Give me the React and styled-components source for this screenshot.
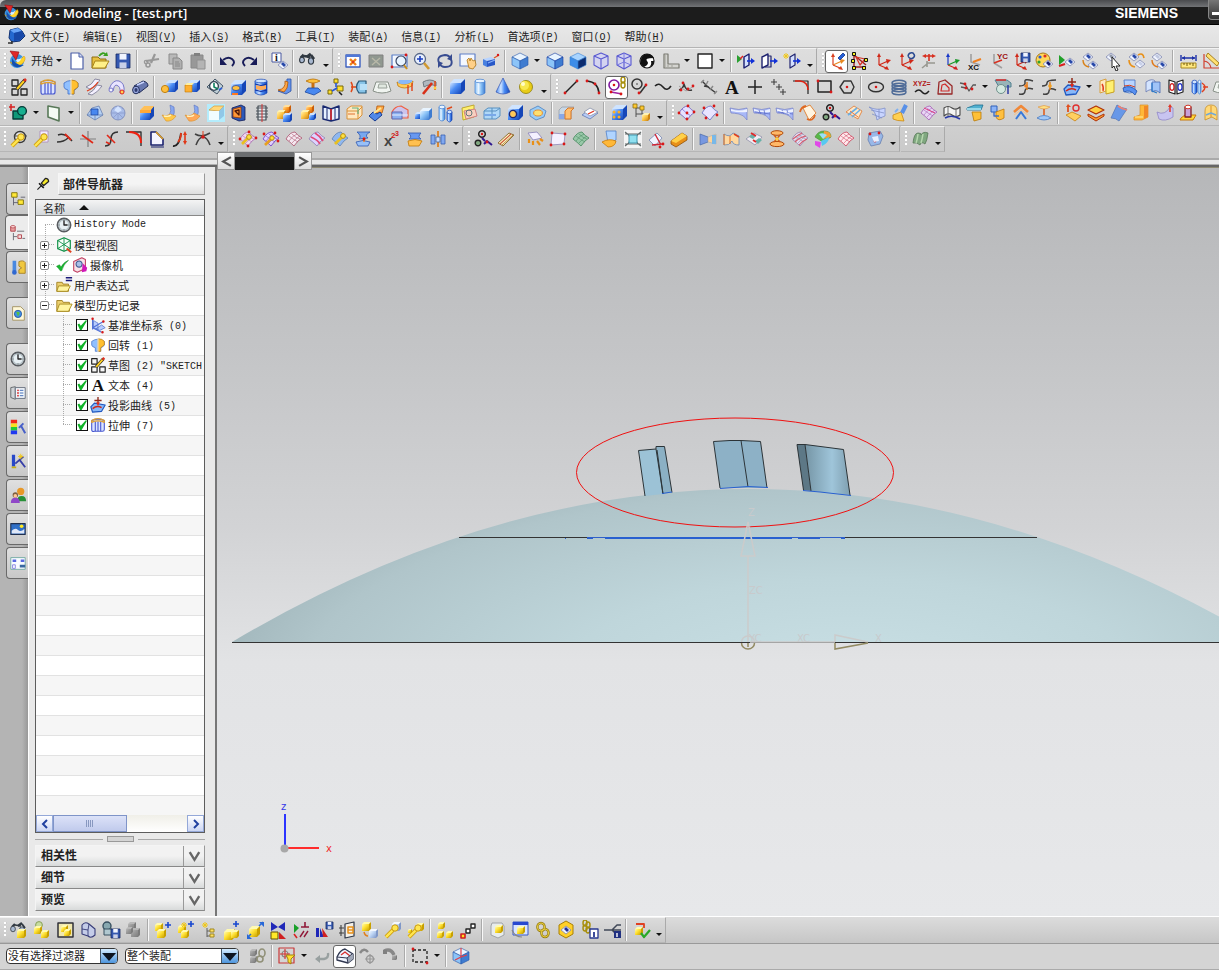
import React from 'react';
import styled, { createGlobalStyle, css } from 'styled-components';

const GlobalStyle = createGlobalStyle`
  * { box-sizing: border-box; }
  body {
    margin: 0;
    background: #c8c8c8;
    color: #222;
    font-family: "Noto Sans CJK SC", "Liberation Sans", sans-serif;
    font-size: 11px;
  }
  button, select { font: inherit; color: inherit; }
`;

/* ---------- drawing helpers: every icon is a list of shapes on a 20 x 20 grid ---------- */

const p = (d, fill = 'none', stroke = 'none', w = 1) => ({ d, fill, stroke, w });
const l = (d, stroke = '#222', w = 1) => p(d, 'none', stroke, w);
const oval = (x, y, rx, ry, fill, stroke, w) =>
  p(`M${x - rx} ${y}a${rx} ${ry} 0 1 0 ${2 * rx} 0a${rx} ${ry} 0 1 0 ${-2 * rx} 0z`, fill, stroke, w);
const dot = (x, y, r = 1.5, fill = '#d81818', stroke, w) => oval(x, y, r, r, fill, stroke, w);
const text = (t, x, y, size, fill = '#111', font = 'Liberation Serif') => ({ t, x, y, size, fill, font });

const tones = {
  blue: ['#cfe4ff', '#4a8cf4', '#1546b8'],
  deep: ['#a8d4ff', '#3d8de8', '#0c2c70'],
  light: ['#e8f4ff', '#8cc4f8', '#3f7cd0'],
  ice: ['#f4f8ff', '#bcd4f4', '#8098c8'],
  gold: ['#fff2b0', '#ffc84a', '#cc8412'],
  orange: ['#ffe0a0', '#ff9c28', '#c85c08'],
  yellow: ['#fffab0', '#ffe030', '#c8a000'],
  gray: ['#b8b8b8', '#989898', '#7c7c7c'],
};
const ramp = (tone) => `url(#ramp-${tone})`;
const cube = (x, y, a, tone = 'blue', k = Math.round(a / 3)) => {
  const [top, , side] = tones[tone];
  return [
    p(`M${x} ${y + k}h${a}v${a}h${-a}z`, ramp(tone)),
    p(`M${x} ${y + k}l${k} ${-k}h${a}l${-k} ${k}z`, top),
    p(`M${x + a} ${y + k}l${k} ${-k}v${a}l${-k} ${k}z`, side),
  ];
};
const iso = (x, y, r, tone = 'light', edge = '#2454a8') => {
  const [top, front, side] = tones[tone];
  const h = r / 2;
  return [
    p(`M${x} ${y - r}l${r} ${h}l${-r} ${h}l${-r} ${-h}z`, top, edge, 0.6),
    p(`M${x - r} ${y - h}l${r} ${h}v${r}l${-r} ${-h}z`, front, edge, 0.6),
    p(`M${x + r} ${y - h}l${-r} ${h}v${r}l${r} ${-h}z`, side, edge, 0.6),
  ];
};
const isoWire = [
  p('M10 2l7 3v9l-7 4-7-4V5z', '#d4d4f0', '#5858d0', 1.1), l('M3 5l7 3 7-3M10 8v10', '#5858d0', 1.1),
];
const can = (x, y, w, h, tone = 'blue') => {
  const [top, , side] = tones[tone];
  return [
    p(`M${x} ${y}v${h}q${w / 2} 4 ${w} 0v${-h}z`, `url(#round-${tone})`, side, 0.7),
    oval(x + w / 2, y, w / 2, 1.8, top, side, 0.7),
  ];
};
const sheet = (fill = '#e4e0ff', stroke = '#7868c0') => [
  p('M2 10Q6 3 11 3Q14 7 18 9Q14 11 10 17Q6 13 2 10z', fill, stroke, 0.9),
];
const mesh = (fill, stroke) => [
  ...sheet(fill, stroke),
  l('M5 7q5 4 9 6M8 5q4 4 8 5M5 12q3-5 8-7M8 14q4-5 8-7', stroke, 0.6),
];
const key = [l('M3 17l7-7', '#d0a010', 4), l('M3 17l7-7', '#ffe650', 2.4), dot(12, 8, 3.2, '#ffe650', '#c89810'), p('M12 3l1 5 5-1-1-3-3 1z', '#d4d4d4')];
const star = (x, y) => [l(`M${x - 3} ${y}h6M${x} ${y - 3}v6M${x - 2} ${y - 2}l4 4M${x + 2} ${y - 2}l-4 4`, '#f0c818', 1)];
const nodes = (...pts) => pts.map(([x, y]) => dot(x, y, 1.4));
const axes = (a = '#d02818', b = a, c = a) => [
  l('M6 14V4', a, 1.2), p('M4 6l2-4 2 4z', a),
  l('M6 14l9-4', b, 1.2), p('M13 8l5 1-4 4z', b),
  l('M6 14l7 3', c, 1.2), p('M11 18l5 1-2-4z', c),
];
const arrowRight = (y = 10, c = '#1030d8') => [l(`M11 ${y}h6`, c, 1.6), p(`M15 ${y - 3}l4 3-4 3z`, c)];
const diamond = (x, y, c = '#2848a8') => [
  p(`M${x - 5} ${y}l5-4 5 4-5 4z`, '#f0f4ff', '#8088b0', 0.8),
  p(`M${x - 2} ${y - 1}l2-2 3 3-2 2z`, c),
];
const link = (x, y, s = '#a89010') => [oval(x, y - 3, 2, 3, 'none', s, 1.5), oval(x, y + 2, 2, 3, 'none', s, 1.5)];
const plus = (x, y, c = '#1848d0') => [l(`M${x - 3} ${y}h6M${x} ${y - 3}v6`, c, 1.6)];
const disk = (x, y, s) => [
  p(`M${x} ${y}h${s}v${s}h${-s}z`, '#3458b0', '#182860', 0.8),
  p(`M${x + s * 0.25} ${y}h${s * 0.5}v${s * 0.4}h${-s * 0.5}z`, '#f0f4ff'),
  p(`M${x + s * 0.25} ${y + s * 0.6}h${s * 0.5}v${s * 0.4}h${-s * 0.5}z`, '#c8d0e8'),
];
const fan = (c1, c2) => [p('M2 4q8 4 16 1v8q-6 2-8 4-1-9-8-13z', c1, c2, 0.8)];
const blade = (lines) => [
  p('M1 5q9 3 17 0v12q-3-5-8-6T2 10z', '#a8b8f8', '#7480c8', 0.7),
  p('M2 6q8 3 16 0v3q-8 1-16-1z', '#eef2ff'),
  ...(lines ? [l('M7 7q1 3 2 4M12 7q1 4 1 5M3 9q8 1 15 2', '#5c6cc8', 0.8)] : []),
];
const binocular = (s = '#303840') => [
  l('M3 7l3-3M9 6l4-3', s, 3.4), l('M6 5l6 1', s, 2.4),
  oval(4, 9, 2.4, 2.8, '#a8b8d0', s, 1.1), oval(13, 10, 2.6, 3.2, '#a8b8d0', s, 1.1), l('M13 4l3 4', s, 2.6),
];

const icons = {
  nx: [dot(10, 11, 7, '#3c94e0'), p('M3 12Q8 16 17 6q3 3-2 8-6 5-12-2z', '#ffd428', '#d89000', 0.5), p('M5 8q4 8 12 7-8 5-12-1z', '#1450b0'), p('M8 8q4 3 7-1-2 6-5 5z', '#d8f0ff'), p('M3 1l9 1-3 8z', '#e02828', '#900c10', 0.6)],
  app: [p('M4 4l8-2 4 3 3 5-5 5-8 1-3-4z', '#2468d0', '#103070'), p('M4 4l8-2 4 3-8 2z', '#68a4f8'), p('M8 7l8-2 2 5-4 4-6 1z', '#1848a8'), l('M2 17h4M6 15v3', '#303030', 1.4)],
  new: [p('M4 2h8l4 4v12H4z', '#fff', '#4c60a8', 1.2), p('M12 2v4h4', '#d4dcf4', '#4c60a8')],
  open: [p('M2 6h6l2 2h6v9H2z', '#e8c040', '#8c6c10'), p('M5 10h14l-4 7H2z', '#fff088', '#a88418'), l('M9 5q4-5 7-1', '#38a020', 1.8), p('M13 5l5 0-1-4z', '#38a020')],
  save: disk(3, 3, 14),
  cut: [l('M13 3l-4 9M4 10l13-2', '#989898', 2.2), dot(6, 14, 2, 'none', '#989898', 1.6), dot(4, 11, 1.6, 'none', '#989898', 1.4)],
  copy: [p('M4 3h8v10H4z', '#b8b8b8', '#8c8c8c'), p('M8 7h6l3 3v8H8z', '#b0b0b0', '#888'), l('M10 11h4M10 13h5M10 15h5', '#888')],
  paste: [p('M3 4h12v13H3z', '#989898', '#888'), p('M6 2h6v3H6z', '#808080'), p('M9 9h8v9H9z', '#b4b4b4', '#909090')],
  undo: [l('M6 9q5-4 9-1t0 7', '#181c58', 2), p('M3 6v8h7z', '#181c58')],
  redo: [l('M14 9Q9 5 5 8t0 7', '#181c58', 2), p('M17 6v8h-7z', '#181c58')],
  info: [p('M3 2h9v9H3z', '#fff', '#4858a0'), text('i', 6, 10, 10), ...diamond(14, 14)],
  find: binocular(),
  fit: [p('M3 4h14v12H3z', '#fff', '#3c60c0', 1.4), p('M3 4h14v2H3z', '#5078d8'), l('M7 8l6 6M13 8l-6 6', '#f08018', 2.4), dot(10, 11, 1, '#d82020')],
  fitGray: [p('M3 4h14v12H3z', '#909890', '#808080'), l('M6 7l8 7M14 7l-8 7', '#b8b8a8', 1.4)],
  zoomBox: [p('M3 4h15v12H3z', '#f4f8ff', '#5c80c8', 1.2), dot(12, 10, 5, '#e8f4ff', '#384868', 1.2), l('M15 14l3 4', '#c89020', 2), ...nodes([17, 4], [3, 16])],
  zoomIn: [dot(8, 8, 5.5, '#e8f0ff', '#586888', 1.3), l('M12 12l5 6', '#d09830', 2.6), ...plus(8, 8, '#183cc0')],
  rotate: [l('M4 12Q1 5 10 4q4 0 6 4M16 8q3 8-6 8-4 0-6-4', '#384c90', 1.8), p('M17 3v7l-5-2zM3 17v-7l5 2z', '#384c90')],
  pan: [p('M2 3h15v12H2z', '#f4f8ff', '#6080c8', 1.2), p('M9 9l2-2 1 3 1-3 2 3 2-1 1 5-3 4-4-1z', '#ffd088', '#b07818', 0.8)],
  perspective: [p('M2 8l8-2 4 2-8 2z', '#b8d4ff'), p('M2 8l4 2v6l-4-2z', '#4880e0'), p('M6 10l8-2v6l-8 2z', '#2858c8'), l('M13 7l5-3', '#e05020', 1.2), dot(17, 4, 1.2), l('M7 12l7-3', '#88b0f8', 1.2)],
  shaded: iso(10, 10, 8, 'light'),
  shadedEdge: iso(10, 10, 8, 'light', '#1038a0'),
  solid: iso(10, 10, 8, 'deep', '#3880d0'),
  wire: isoWire,
  wireHidden: [...isoWire, l('M10 2v9l-7 3M10 11l7 3', '#7878e0', 1)],
  contrast: [dot(10, 10, 7, '#fff', '#111', 1.2), p('M10 3a7 7 0 0 0-3 13q6-3 3-6t7-3q-2-4-7-4z', '#111'), p('M14 10h3q0 5-5 6 3-2 2-6z', '#111')],
  bracket: [p('M4 3h4v10h11v4H4z', '#d4d4d0', '#787870', 1.2), l('M5 4v12M8 14v2M12 14v2', '#a0a098')],
  blank: [p('M3 3h14v14H3z', '#fff', '#222', 1.4)],
  clipA: [p('M8 6l5-3v11l-5 3z', '#d4e0ff', '#181c70', 1.4), ...arrowRight(10), p('M1 4l5 4-5 4z', '#28a030'), l('M4 8l3-3', '#e02020', 1.4)],
  clipB: [p('M3 6l6-3v11l-6 3z', '#fff', '#202470', 1.4), p('M9 5h3v11H6', 'none', '#202470', 1.2), ...arrowRight(10)],
  clipC: [p('M8 6l5-3v11l-5 3z', '#d4e0ff', '#202470', 1.2), ...arrowRight(10), ...star(4, 5)],

  wcsMove: [...axes('#d84020', '#e88820', '#d84020'), p('M11 7l5-5 2 2-5 5z', '#2460d8', '#103490', 0.8)],
  wcsNodes: [l('M4 3v14M4 16h12M4 4l12 10', '#a02020', 1.4), l('M6 6l9 2-5 6z', '#d83020', 1.2), ...[[4, 3], [3, 10], [4, 17], [16, 9], [14, 17]].map(([x, y]) => p(`M${x - 1.5} ${y - 1.5}h3v3h-3z`, '#f8f020', '#111'))],
  wcs: axes(),
  wcsRotate: [...axes(), l('M12 5q1-4 5-3 3 3 0 5-3 2-5-2', '#284890', 1.6)],
  wcsShift: [l('M10 3v7M5 5h10', '#d83020', 1.6), p('M3 5l4-2v4zM17 5l-4-2v4z', '#d83020'), l('M8 10v6M8 12h8M8 13l-5 4', '#989890', 1.6)],
  wcsColor: axes('#1838c8', '#189828', '#d02020'),
  wcsX: [l('M6 3v8l9 3', '#a0a0a0', 1.6), l('M8 11l8-3', '#f08020', 2), text('XC', 3, 19, 8, '#111', 'Liberation Sans')],
  wcsY: [l('M6 3v9l8 5', '#a0a0a0', 1.6), l('M6 12l8-3', '#d83020', 1.6), text('YC', 9, 8, 8, '#a01010', 'Liberation Sans')],
  wcsSave: [...axes(), ...disk(10, 2, 9)],
  palette: [dot(9, 9, 7, '#ffd858', '#a87818'), dot(6, 6, 1.6, '#2858d8'), dot(11, 5, 1.6, '#e03020'), dot(5, 11, 1.6, '#30a030'), ...diamond(14, 13, '#101870')],
  play: [p('M2 4l6 5-6 5z', '#20a028'), l('M2 15l6-2', '#d82020', 2), ...diamond(13, 11)],
  partA: [...diamond(8, 6), ...diamond(13, 14), l('M3 9q0 6 6 7', '#d88018', 1.4)],
  partPick: [...diamond(8, 6, '#9098a8'), p('M9 6l8 9-4 0 2 4-2 1-2-5-2 2z', '#fff', '#222')],
  partB: [...diamond(8, 6), ...diamond(14, 13, '#c8d0e8'), l('M12 4q5-3 6 3M3 9q0 6 6 7', '#e89018', 1.6)],
  partC: [...diamond(8, 6, '#c0c8e0'), ...diamond(13, 14), l('M3 9q0 6 6 7', '#e07818', 1.4)],
  ruler: [l('M3 4v6M18 4v6M4 7h13', '#1c30a8', 1.4), p('M4 7l3-2v4zM17 7l-3-2v4z', '#1c30a8'), p('M3 12h15v5H3z', '#ffe880', '#a88820'), l('M6 12v2M9 12v3M12 12v2M15 12v3', '#705808')],
  angle: [l('M3 3v14h15M3 10q6 1 7 7', '#d04030', 1.2), p('M7 2l11 10-2 3L5 5z', '#ffe070', '#a88020')],

  sketch: [l('M3 3h6v6H3zM3 12h6v6H3zM12 12h6v6h-6z', '#222', 1.3), l('M8 12l8-9', '#222', 3.4), l('M8 12l7-8', '#ffd020', 2), l('M15 4l2-2', '#e03020', 2.6)],
  extrude: [p('M3 5v10q0 3 3 2h9q2 0 2-2V5q-7-3-14 0z', '#dce4ff', '#4858d0', 1.2), l('M7 6v11M10 6v11M13 6v11', '#4858d0', 1.2), l('M3 5q7-4 14 0v2q-7-3-14 0z', '#e0a030', 1.4)],
  revolve: [p('M3 6q7-5 14 0v4q-2 3-4 3v4H7v-4q-4-1-4-3z', '#90c0ff', '#4070c8', 0.8), p('M10 3q5 0 7 3v4l-4 3v4h-3z', '#ffc030', '#c08010', 0.8), l('M10 1v18', '#f8f8f8', 1)],
  sweep: [p('M2 10Q8 8 11 2l5 1Q13 9 6 12z', '#f4f0ff', '#808098', 0.9), p('M4 17Q10 14 13 8l5 1q-4 6-10 9z', '#f4f0ff', '#808098', 0.9), l('M3 14Q10 11 14 5', '#e04020', 1.3)],
  variSweep: [p('M2 12Q6 2 12 4q6 2 5 11l-4 1q1-7-4-8-2 0-3 6z', '#e8e4ff', '#7878c8'), dot(4, 13, 2, '#f4f4ff', '#7878c8'), dot(15, 15, 2, '#ffd050', '#e02020')],
  tube: [p('M4 9l9-5q5 1 5 5l-9 7z', '#6878b0', '#202c58'), oval(6, 13, 3.4, 3.8, '#98a8e0', '#202c58'), oval(6, 13, 1.6, 2, '#303c70'), l('M7 8l7-3', '#c8d4ff', 1.4)],
  boss: [...cube(7, 3, 9, 'blue', 3), dot(6, 12, 3.6, '#ffc040', '#c08010')],
  pad: [...cube(6, 3, 9, 'blue', 3), p('M3 8h7v7H3z', '#ffb030', '#c07808', 0.6), p('M3 8l2-2h7l-2 2z', '#fff0a0')],
  hole: [p('M2 10L10 2l8 7-6 8z', '#c0d0d8', '#485868'), dot(9, 9, 4.4, '#fff', '#384858', 1.4), l('M9 6v4l4 2', '#108060', 1.6), l('M14 13l3-2', '#3060d0', 2)],
  pocket: [...cube(3, 3, 11, 'blue', 4), oval(8, 11, 4, 2.5, '#ffc040', '#1438a0', 0.7), p('M4 16h6v2H4z', '#ff7820')],
  groove: [...can(4, 4, 12, 12, 'blue'), p('M5 8q5 2 10 0v4q-5 2-10 0z', '#ffac58'), l('M4 7q6 3 12 0M4 13q6 3 12 0', '#1030a0')],
  rib: [p('M13 2h4v12l-5 3-8-3 5-1q4-3 4-11z', '#6894e8', '#2850a8', 0.8), p('M11 4q1 8-7 9l6 2q4-3 4-10z', '#ffa848', '#b05808', 0.8)],
  emboss: [p('M3 4q7-4 14 0-7 4-14 0z', '#ffc038', '#b87008', 0.8), l('M10 6v6', '#c87010', 3), p('M5 11h10l3 3-7 4-9-3z', '#4888f0', '#1c48a0', 0.8)],
  pattern: [p('M8 2h4v4H8zM2 13h4v4H2zM11 9h6v5h-6z', '#ffe030', '#786808'), l('M10 6v4M6 14l5-3', '#2858d8', 1.6), l('M13 15l3 3', '#202020', 1.6)],
  mirrorBody: [l('M2 5q3 5 0 10M2 10h6', '#e04818', 1.5), p('M17 4h-7q-5 6 0 12h7z', '#88c4e8', '#285878', 1.2), p('M11 7h7v6h-7z', '#b8e0f8')],
  plate: [p('M4 5h12l3 9q-9 4-18 0z', '#f0f4f0', '#889088'), p('M7 7h7l1 4H6z', '#e0e8e0', '#98a098')],
  bend: [p('M2 5q8 5 16-1l-1 5q-8 4-14 0z', '#ffcc58', '#c07810', 0.8), p('M4 3h13v2q-7 4-14 1z', '#88b8f8'), l('M13 8v9M17 6v8', '#e04018', 1.4)],
  bendCut: [p('M5 5q7-4 13 0v4q-6-3-12 1z', '#b0b8c0', '#707880'), l('M14 6L5 17', '#d83018', 2.6), l('M17 4v9', '#e05020', 1.6), dot(17, 11, 1.4, '#ffd040')],
  block: cube(3, 2, 11, 'blue', 4),
  cylinder: [...can(5, 4, 10, 12, 'light')],
  cone: [p('M10 1l7 14q-7 4-14 0z', 'url(#round-blue)', '#3050b0', 0.7)],
  sphere: [dot(10, 10, 6.5, '#e8cc18', '#8c7c08', 0.8), dot(8.5, 8.5, 4.5, '#f8e850'), dot(7, 7, 2, '#fffcc8')],
  line: [l('M4 16L16 4', '#222', 1.5), ...nodes([4, 16], [16, 4])],
  arc: [l('M3 4q11 1 12 12', '#222', 1.5), ...nodes([3, 4], [11, 7], [15, 16])],
  curves: [dot(7, 8, 5, '#fff', '#8018a0', 1.6), dot(7, 8, 1.3), ...link(16, 6), l('M4 15l11 2', '#a020a0', 1.4), ...nodes([4, 15], [14, 17])],
  circleLine: [dot(7, 7, 5, 'none', '#333', 1.5), l('M10 16l6-8', '#333', 1.5), ...nodes([9, 16], [16, 8]), dot(7, 7, 0.8, '#333')],
  spline: [l('M2 9q4-4 8 1t8-1', '#222', 1.6)],
  polyCurve: [l('M3 13q4-1 5-6 2 8 8 6', '#383838', 1.4), l('M3 9l7 5 8-5', '#a0a0a0'), ...nodes([7, 6], [12, 12], [5, 13], [17, 9])],
  splineOff: [l('M3 4l6 6 8 6M5 9l5 1', '#383838', 1.4), l('M2 6l3-3M7 8l2-4M11 13l3-4M15 17l3-3', '#888', 1.4)],
  letter: [text('A', 3, 17, 19, '#111')],
  point: [l('M10 3v14M3 10h14', '#222', 1.5)],
  points: [l('M3 5h6M6 2v6M8 10h6M11 7v6M12 15h6M15 12v6', '#404040', 1.1)],
  corner: [l('M2 4h15v13', '#222', 1.2), l('M4 4h5q8 1 8 9', '#e02010', 1.6)],
  rect: [p('M4 4h13v11H4z', 'none', '#222', 1.5), ...nodes([4, 4], [17, 15])],
  polygon: [p('M7 4h7l3 6-3 6H7l-4-6z', 'none', '#333', 1.4), dot(10, 10, 1.3)],
  ellipse: [oval(10, 10, 7.5, 4.8, 'none', '#333', 1.4), dot(10, 10, 1.3)],
  helix: [0, 3, 6, 9].map((d) => oval(10, 6 + d, 7, 2.8, 'none', '#506c98', 1.5)),
  law: [text('XYZ=', 1, 9, 7, '#b01818', 'Liberation Sans'), l('M3 15q4-4 7 0t7-1', '#222', 1.5)],
  offset: [p('M4 5l6-2 7 6v8H3z', 'none', '#982828', 1.3), p('M7 8l3-1 4 4v3H6z', 'none', '#d02828', 1.2)],
  bridge: [l('M2 6l5 1 4 7 4-6h3M3 10l5 1', '#585858', 1.3), ...nodes([8, 11], [14, 12], [7, 7])],
  wrap: [p('M2 3h12l4 3v4H6z', '#98b4b8', '#508090'), dot(8, 12, 4.5, '#d4e8e0', '#70908c'), l('M15 8v9', '#2838a0', 1.5), l('M3 3h10', '#e02020', 1.4)],
  curveS: [l('M17 4Q8 1 9 5t-6 4M17 12q-8-2-8 2t-6 3', '#404040', 1.5), l('M11 5v8', '#e08020', 1.5), dot(10, 9, 1.8, '#f08020')],
  curveT: [l('M17 3Q8 3 8 6t-5 3M17 13q-7-3-7 1t-6 3', '#404040', 1.5), l('M11 5v8', '#e08020', 1.5), dot(11, 9, 1.8, '#f0a020')],
  project: [p('M2 12l4-4 12 2-4 7-10 1z', '#88b8f8', '#2058c0', 1.3), l('M4 14q5-4 10-1', '#d02818', 1.6), l('M10 1v8M6 5h8', '#902818', 1.5), p('M8 7l2 4 2-4z', '#e02818')],
  combine: [p('M3 4l6-2v12l-6 2z', '#ffe8c0', '#d8a040'), p('M9 5l8-2v12l-8 2z', '#fff070', '#c8a020'), l('M5 7q2 3 1 7', '#e04020', 1.4)],
  intersect: [p('M4 3h11v12q-6 2-10 0z', '#b8d4ff', '#4470c0', 0.8), p('M3 11q7-4 14 3l-2 4q-5-6-11-3z', '#5890f0', '#2050a8', 0.8), l('M4 9q6-2 11 1', '#d84020')],
  section: [p('M3 5q6-4 9-1v10q-5-3-9 1z', '#d4e4ff', '#6878b0', 0.8), p('M9 5h8v11q-4-4-8-1z', '#a0c4f8', '#4868b0', 0.8), l('M9 6v8l5 2', '#2878c8', 1.2)],
  extract: [p('M3 3l6 2v12l-6-2zM11 5l6-2v12l-6 2z', '#fff', '#222', 1.2), oval(6, 10, 2, 3.4, 'none', '#d02020', 1.2), oval(14, 10, 2, 3.4, 'none', '#2030c8', 1.2)],
  unwrap: [...can(3, 5, 5, 10, 'blue'), ...can(9, 5, 3, 10, 'light'), l('M13 6q6 4 0 9', '#e04020', 1.5), l('M14 10h5', '#e04020', 1.5)],

  csys: [p('M4 8h10v8H4z', '#109878', '#063c38', 1.4), dot(13, 8, 4.4, '#18b090', '#063c38', 1.4), l('M2 1v7M0 4h6', '#d82020', 1.5)],
  plane: [p('M4 3l11 2v13L4 14z', '#f4fcf4', '#587858', 1.6)],
  facet: [p('M2 12L7 5l7-2 4 9-8 5z', '#b4d0f4', '#6880b0', 0.8), p('M6 6h7v6H6z', '#4888f0', '#2048a0', 0.8), l('M2 12h4M13 12l5 0M10 12v5', '#6880b0', 0.8)],
  sphereMesh: [dot(10, 10, 7, '#a8bce8', '#7888b8', 0.8), l('M3 10h14M10 3v14M5 5l10 10M15 5L5 15', '#8898c8', 0.7), p('M6 7l4-4 4 4-4 3z', '#d4e4ff')],
  blendEdge: [...cube(3, 3, 10, 'blue', 4), p('M3 7l4-4h10l-3 4-11 2z', '#ffc058'), p('M3 7h11v3H3z', '#ffa838')],
  faceBlend: [p('M10 2l4 2q1 6-1 10l-4-1q3-5 1-11z', '#88a8f0', '#5870c0', 0.6), p('M2 12q5 2 8-1l6 2q-4 6-10 5z', '#ffc848', '#d89028', 0.6), p('M4 13q5 1 7-1', 'none', '#fff4c0', 1.4)],
  softBlend: [p('M11 2l4 2q1 6-1 10l-4-1q3-5 1-11z', '#88a8f0', '#5870c0', 0.6), p('M2 12q6 2 9-2l6 3q-4 6-11 5z', '#ffa858', '#d89028', 0.6), p('M4 13q5 1 7-1', 'none', '#fff4c0', 1.4)],
  chamfer: [p('M1 1h18v18H1z', '#b4ecfc'), p('M3 7l5-4h10l-5 5z', '#ffd878', '#d8a040', 0.8), p('M3 8h10v9H3z', '#f0fcff'), p('M13 8l5-5v10l-5 4z', '#90c8e8')],
  draft: [p('M3 5l9-3 4 2v13l-6 1-7-3z', '#2c58b8', '#101c58', 0.8), p('M4 6l8-2v11l-8-1z', '#ff9838', '#903808', 0.8), l('M6 8l4-1v5z', '#501808', 1.3)],
  thread: [p('M6 3h8v14H6z', '#e4e8ec', '#404850', 1.2), l('M4 5h12M4 8h12M4 11h12M4 14h12', '#505860', 1.1), l('M10 1v18', '#d03030')],
  unite: [...cube(8, 2, 6, 'orange'), ...cube(2, 7, 7, 'gold'), ...cube(8, 10, 7, 'blue')],
  subtract: [...cube(8, 2, 6, 'orange'), ...cube(3, 7, 7, 'gold'), ...cube(11, 10, 5, 'blue')],
  book: [p('M2 3l8 3v12l-8-2zM18 3l-8 3v12l8-2z', '#e8f0ff', '#182870', 1.4), l('M6 5v11M14 5v11', '#182870'), l('M10 6v11', '#e02020', 1.5)],
  sew: [p('M3 6l4-3h11v9l-4 4H3z', '#ffe8c0', '#d89038'), l('M3 8h11l4-4M14 8v8', '#d89038'), l('M8 5h6v6', '#60b080', 1.2), l('M4 11h7', '#e07030')],
  patch: [p('M10 3h7l-2 7-6 0z', '#ffa848', '#b05808', 0.8), p('M2 13l4-4 4 2 3-2 2 3-7 6z', '#5088e8', '#183c90'), l('M7 10l7-5', '#ffe890', 2)],
  wrapGeo: [p('M2 9q3-6 9-6l7 4v8H2z', '#ccc4ec', '#f06040', 1.2), p('M2 9h10v7H2z', '#8cb0f0', '#6068b0'), l('M2 12h16', '#e8f0ff')],
  scaleBody: [...cube(2, 9, 5, 'blue'), ...cube(7, 5, 9, 'light')],
  tubes: [...can(3, 4, 6, 12, 'light'), ...can(11, 9, 5, 8, 'blue'), l('M11 6l5-2', '#e04818', 1.4)],
  trim: [p('M3 5l12-3v12L4 17z', '#fff070', '#c0a830'), p('M5 8l11-2 2 7-11 3z', '#f8d0c0', '#d08080'), dot(10, 10, 3, 'none', '#607878')],
  split: [p('M2 8l4-3h12v8l-4 3H2z', '#b0d8f8', '#5890c0'), l('M2 8h12l4-3M10 5v11', '#5890c0'), p('M2 11h12v2H2z', '#78a8e8')],
  face: [...cube(3, 2, 11, 'blue', 4), dot(8, 11, 3.6, '#ffc858', '#202870', 1.4)],
  hollow: [p('M2 7l8-4 8 5-2 6-8 3-6-4z', '#98ccf8', '#6090c8'), oval(10, 10, 4.4, 3, '#ffe070', '#e89030')],
  thick: [p('M2 7l3-3h12l-3 3v9H2z', '#c8d8e8', '#98a0a8', 0.8), p('M2 11h6v5H2z', '#88a8e8'), p('M8 8l3-3h6l-3 3v8H8z', '#ffc070', '#d87828')],
  offsetFace: [p('M2 12l8-6 8 4-8 6z', '#b8ccf8', '#6078b0', 0.8), p('M4 9l6-4 8 4-8 4z', '#fff', '#8890a8', 0.8), l('M8 11l6-3', '#e03828', 1.3)],
  group: [...cube(3, 2, 11, 'blue', 4), ...[[5, 9], [10, 9], [5, 14], [10, 14]].map(([x, y]) => dot(x, y, 1.5, '#ffb020'))],
  tree: [l('M4 2v12M4 5h6M4 11h8M10 5v6', '#505050', 1), p('M1 1h4v4H1zM8 3h4v4H8z', '#ffc830', '#8c7010', 0.8), ...cube(10, 10, 6, 'gold')],

  surfA: [...sheet(), l('M5 6q5 5 9 7', '#9888e0'), ...nodes([2, 10], [11, 3], [17, 9], [10, 16], [10, 10])],
  surfB: [...sheet('#e8e4ff', '#7078c8'), ...nodes([4, 5], [14, 3], [17, 12], [6, 15])],
  ruled: blade(false),
  through: blade(true),
  throughMesh: [...blade(true), l('M3 7l12 4', '#fff', 0.8)],
  swept: [p('M5 5l7-3 6 8-7 7z', '#fff4e0', '#e08840'), l('M2 9q1-5 6-6M9 16q6 3 8-4', '#e06820', 1.8)],
  nodesDark: [dot(9, 5, 3.3, '#d0d0d0', '#222', 1.5), dot(5, 14, 2.8, '#80a880', '#222', 1.4), dot(9, 5, 1.2), l('M9 9l3 3M11 15l3-3 5 4', '#301890', 2), ...nodes([14, 13])],
  nSided: [p('M2 9l8-6 8 5-4 8z', '#ffe8c8', '#e07830', 0.8), l('M4 12l9-7M8 14l8-7', '#68b0e8', 1.6), l('M6 8l8 6', '#f07840')],
  transition: [...fan('#c8d4ff', '#8090c8'), l('M4 7l13 3M5 11l10 4', '#8090c8', 0.8), l('M12 6v9', '#8090c8', 0.8)],
  brush: [p('M3 12l8-3 3 9q-7 0-11-2z', '#ffd050', '#c88818', 0.8), l('M12 10l4-8', '#5890e8', 4), l('M5 9l3-3', '#80b0f0', 2)],
  offsetSurf: [...mesh('#e8d4f4', '#a868b8'), l('M5 5l11 5', '#e04080', 1)],
  enlarge: [p('M2 5q4-3 8 0t8-1v8q-4 3-8 0t-8 1z', '#f4f4f4', '#484848', 1.1), l('M6 4v9M14 5v9', '#707070'), l('M3 15q7-4 15 1', '#2838a8', 1.6)],
  law2: [p('M2 5l8-3h8l-2 5H2z', '#50b0d0', '#207090', 0.8), p('M7 9h9v7l-7 2z', '#ffc038', '#b87808', 0.8), p('M2 5h14v2H2z', '#98d8e8')],
  extension: [p('M3 3h6v6H3z', '#8cb4f8', '#3060b8'), p('M8 9l8-3v9q-6 4-8-1z', '#ffc040', '#c07808', 0.8), l('M6 9v4h5', '#4070c8', 1.4)],
  chevrons: [l('M3 9l7-6 7 6', '#f08838', 2.6), l('M5 16l5-7 5 7', '#3878d8', 2), l('M3 12l7-5 7 5', '#ffc080', 1)],
  midSurf: [p('M4 4q6-3 12 0-6 4-12 0z', '#ffe080', '#e0a058', 0.8), p('M3 15q7-5 14 0-7 4-14 0z', '#a0c8f8', '#4878c0', 0.8), l('M10 6v6', '#e06020', 1.6)],
  offsetRed: [dot(13, 5, 3, 'none', '#e03030', 1.4), l('M5 9V3', '#e05020', 1.8), p('M3 4l2-3 3 3z', '#e05020'), p('M3 12l6-3 9 4-6 5z', '#ffd060', '#c88010', 0.8)],
  layers: [p('M2 7l8-4 8 4-8 4z', '#ffd040', '#b03008', 1.2), p('M2 11l8 4 8-4v2l-8 5-8-5z', '#f8a030', '#b03008', 1)],
  bladeBlue: [p('M8 2q4 3 10 4L10 18q-3-3-8-3z', '#6898e8', '#5878b8', 0.8), l('M9 3q4 3 9 4', '#f08070', 1.6)],
  boot: [p('M8 2h8v12l-6 3H2v-3l6-2z', '#ffb838', '#d88c28', 0.7), p('M12 3h4v11l-4 2z', '#f08828'), l('M3 14h8', '#ffe890', 1.2)],
  flange: [p('M2 9q8 4 13-5l3 1v9q-8 5-14 2z', '#c8c4f0', '#9088c8', 0.8), l('M15 9V3', '#e03828', 1.5), p('M13 4l2-3 2 3z', '#e03828')],
  stand: [p('M3 15l4-3h11l-3 5H2z', '#ffd838', '#c87808'), p('M7 4h6v10H7z', '#c8a0d8', '#802028', 1.3), oval(10, 4, 3, 1.8, '#fff', '#d03828')],
  arch: [p('M4 17V8q0-6 6-6t6 6v9l-5-3z', '#ffd878', '#c89028', 0.8), l('M10 3v11', '#d89028'), p('M5 12l5-2 5 2', 'none', '#70a8d8', 1.5)],
  hook: [p('M3 5l8-3h7v8l-4 8h-4V8H3z', '#ffc848', '#9058b8', 1.4)],

  loupeKey: [dot(11, 8, 5.5, '#e4e4e4', '#383838', 1.4), l('M5 7h13', '#505050', 1), ...key.slice(0, 3)],
  pageKey: [p('M8 2h8v11H8z', '#f4ecff', '#a888b8', 0.8), l('M10 5h4M10 7h5', '#c0a0c8'), ...key.slice(0, 3)],
  extend: [l('M3 6q7-3 14 6M2 13q7 0 11-4', '#333', 1.5), l('M10 5l6 6', '#e02818', 1.8)],
  cross: [l('M10 2v16M2 10h16', '#808080', 1.2), l('M4 6l11 8', '#e02818', 1.6)],
  divide: [l('M4 17q6 0 6-7t7-7', '#333', 1.6), l('M6 6l8 8M5 13l4 2', '#e02818', 1.6)],
  cornerR: [l('M2 3h15v14', '#333', 1.4), l('M5 3q12 0 12 11', '#f02010', 2)],
  chamferC: [p('M4 3h5l7 7v6H4z', '#f4f4ff', '#1c2470', 1.6), l('M9 3l7 7', '#e0a020', 1.5), l('M4 18h13', '#1c2470')],
  length: [l('M3 17q6 1 8-13', '#222', 1.8), l('M8 13q3-3 3-9', '#e03818', 1.8), l('M15 5v8', '#e03818', 1.6), p('M13 6l2-4 2 4zM13 12l2 4 2-4z', '#e03818')],
  smooth: [l('M2 5q7 4 15-1M3 16q3-8 7-8t7 8', '#404040', 1.6), dot(10, 8, 1.8), l('M10 2v5', '#e04020')],
  meshKey: [...mesh('#f0d8f0', '#b078b8'), ...nodes([2, 10], [11, 3], [18, 9], [10, 17]), l('M4 15l6-6', '#e8c020', 2.6), dot(11, 8, 2.4, '#ffe040', '#b89010')],
  meshKey2: [...mesh('#e0d0ff', '#7848c8'), ...nodes([3, 5], [14, 4], [17, 12]), l('M4 16l6-6', '#e8a020', 2.6), dot(11, 9, 2.2, '#ffe040', '#b89010')],
  meshRed: mesh('#f4e8f0', '#b06078'),
  meshStripe: [...sheet('#dcd4ff', '#9888b8'), l('M4 8q7 3 9 7M8 4q5 3 8 8', '#e04878', 1.7)],
  meshTool: [...sheet('#90b8f0', '#6888b8'), l('M5 15l7-7', '#e8c020', 2.8), dot(13, 7, 2.4, '#ffe040', '#b89010')],
  isocline: [p('M4 3h13q-6 3-2 6l-9 1q3-3-2-7z', '#78a8f0', '#3058b0', 0.8), p('M3 13q7-3 14 0l-2 4H5z', '#98c0f8', '#3058b0', 0.8), l('M11 8v5', '#f08828', 1.5), dot(11, 10, 1.5)],
  cubic: [text('x', 2, 17, 15, '#444', 'Liberation Sans'), text('2', 9, 9, 8, '#d01818', 'Liberation Sans'), text('3', 13, 7, 7, '#d01818', 'Liberation Sans')],
  morph: [p('M3 4h13q-4 4 0 6H4q4-3-1-6z', '#6898f0', '#3058b0', 0.8), p('M3 12q7-3 14 0l-3 5H4z', '#ffc050', '#c07808', 0.8)],
  xform: [p('M3 6h4v9H3zM13 6h4v9h-4z', '#80a8f0', '#3860b0', 0.8), l('M10 2v16', '#e08020', 1.8), p('M8 8h4v5H8z', '#c8dcff', '#4868a0', 0.8)],
  beam: [p('M2 14L13 4l5 2L7 17z', '#fff0c0', '#907038'), l('M4 15L15 5', '#c85838', 1.1), l('M6 16L17 6', '#b09048', 1)],
  spray: [p('M3 4l9-1 5 6-9 2z', '#f4f0ff', '#8880b8', 0.8), l('M4 10v4M8 12v4M12 12l3 4M15 10l3 2', '#e89018', 2.2)],
  fourPoint: [p('M4 4l13 1-1 10-13 1z', '#f4f0ff', '#a098c0'), ...nodes([4, 4], [17, 5], [16, 15], [3, 16])],
  greenMesh: mesh('#98c8a8', '#509068'),
  pour: [p('M6 2h10v9l-8 3z', '#b0d4ff', '#5080c8', 0.8), p('M2 13q7-4 14-1-1 6-8 6z', '#ffb838', '#c87808', 0.8)],
  intersectC: [p('M1 1h18v18H1z', '#f4f4f4'), l('M2 3q5 3 5 7t-5 7M18 3q-5 3-5 7t5 7M2 5h16M2 15h16', '#606868', 1.1), p('M6 6h8v8H6z', '#90e0f0', '#4098b0')],
  explode: [p('M3 11l8-7 5 5-7 8z', '#f0f4ff', '#7888b0', 0.8), l('M6 16l10-1M9 5l6 11', '#d02838', 1.4), ...nodes([17, 15], [14, 18])],
  bar: [p('M2 12L13 4l5 3v4L7 18l-5-3z', '#e89018', '#905008', 0.8), p('M2 12L13 4l5 3L7 14z', '#ffd048')],
  bowtie: [p('M2 5l8 3v5l-8 3z', '#7898e0', '#4868a8', 0.7), p('M10 8l8-3v10l-8-2z', '#ffd498', '#b0b0b0', 0.7), p('M14 6h4v9h-4z', '#78b8e8')],
  wavy: [p('M3 5q6 4 9-1l6 3v9q-6 0-7-4-3 5-8 4z', '#ffd8a0', '#6888b8', 0.8), l('M3 5v11M9 7v8', '#e07020'), l('M13 5l5 3', '#e04020', 1.5)],
  redBlocks: [p('M2 10l8-6 8 4-7 8z', '#f0ecf4', '#9090a8', 0.8), p('M5 8l3-3 4 2-3 3zM11 12l4-3 3 2-4 4z', '#68b0a8'), l('M7 4l5 3M9 11l3 2', '#e02828', 1.8)],
  spool: [oval(10, 4, 6, 2.3, '#ffb868', '#b04808'), oval(10, 15, 7, 2.6, '#ffb868', '#b04808'), l('M7 6l6 7M13 6l-6 7', '#d05818', 1.4), dot(10, 10, 1.8, '#ffd040')],
  stripes: [...mesh('#e4e0f0', '#a088b0'), l('M3 10q5-4 9-6M5 13q5-5 11-6M9 16q3-4 8-6', '#d85868', 1.1)],
  rainbow: [p('M2 8q3-6 9-6 7 0 7 6l-8 5z', '#58b848', '#508838', 0.7), p('M11 2q7 0 7 6l-8 2z', '#f0a038'), p('M6 5q4-2 8 1l-4 4z', '#98e0f8'), p('M2 12l6 1-1 6-5-3z', '#e048e8'), p('M8 12l8-4q0 6-7 9z', '#58c8f0')],
  redGrid: mesh('#ffe8ec', '#d05068'),
  stamp: [p('M4 4l11-2 3 5-3 8-9 2-3-6z', '#98b8e8', '#6880b0', 0.8), ...nodes([5, 5], [14, 4], [10, 12]), p('M7 8l6-1 1 5-5 1z', '#e8f0ff')],
  green: [p('M3 14q1-10 5-10t3 2q2-4 7-2-1 8-3 11-4-3-5 1-3-3-7-2z', '#80a880', '#587858', 0.8), l('M8 5q-1 7-2 9M13 5q-1 6-2 9', '#b8d8b0', 1.5)],

  asmFind: [...binocular().map((s) => ({ ...s, w: (s.w || 1) * 0.7 })), ...cube(8, 9, 7, 'yellow')],
  asmOpen: [dot(7, 5, 3.4, '#c8dca0', '#88a058'), ...cube(2, 6, 6, 'yellow'), ...cube(9, 10, 6, 'yellow')],
  asmFrame: [p('M3 3h15v14H3z', '#f0e8b0', '#303038', 1.5), ...cube(6, 5, 5, 'yellow'), ...cube(9, 9, 5, 'yellow')],
  asmWire: [p('M4 5q3-4 7-1l6 5v6q-4 4-7 1l-6-2z', '#c4cce8', '#383c78', 1.1), l('M4 9l6 1 1-6M10 10v6', '#383c78', 0.9)],
  asmSave: [dot(6, 6, 4, '#88a8b0', '#385060', 1.4), p('M3 9h8v6H3z', '#b0c8d0', '#385060'), ...disk(10, 9, 9)],
  asmGray: [...cube(4, 2, 6, 'gray'), ...cube(7, 8, 7, 'gray'), ...cube(2, 7, 5, 'gray')],
  addPart: [...cube(2, 3, 6, 'yellow'), ...cube(4, 9, 7, 'yellow'), ...plus(15, 5)],
  newPart: [...cube(2, 5, 6, 'yellow'), ...cube(5, 10, 6, 'yellow'), ...star(8, 5), ...plus(15, 4)],
  newParent: [...star(6, 5), l('M8 8v9M8 11h4M8 16h4', '#606060'), p('M11 9h4v3h-4zM11 14h4v3h-4z', '#ffe060', '#a08820')],
  partArray: [...cube(2, 9, 8, 'yellow'), ...cube(9, 10, 6, 'yellow'), ...plus(14, 4)],
  movePart: [...cube(4, 6, 8, 'yellow'), l('M3 17l3-3M14 6l4-4', '#2868d8', 1.5), p('M14 2h5v5zM2 14v5h5z', '#2868d8')],
  mirrorAsm: [p('M3 2l7 5-7 4zM17 2l-7 5 7 4z', '#2028b8'), p('M3 12h7v7H3z', '#ffe828', '#605008'), p('M11 12l7 7h-7z', '#d02020')],
  constraint: [p('M3 4l5 4-5 5z', '#18a028'), l('M10 7h8M14 2v5', '#901838', 1.6), l('M9 17l4-6M13 17l4-6', '#901838', 1.4), l('M3 14l3 4', '#d82020', 1.5)],
  remember: [p('M2 8h3v9H2zM6 8l4 9H6z', '#2028b8'), p('M8 8l6 9H9z', '#d02020'), ...disk(12, 2, 7)],
  sectionAsm: [l('M2 8h5M2 13h5M4 5v11', '#404040', 1.1), p('M8 4l9-2v14l-9 2z', '#f4f0e8', '#303848', 1.2), p('M11 7h5v6h-5z', 'none', '#e89018', 1.5), l('M11 10h5', '#e89018', 1.4)],
  replace: [...cube(2, 2, 7, 'yellow'), ...cube(9, 9, 7, 'ice'), l('M4 12q1 4 4 4', '#e08020', 1.5)],
  partKey: [...cube(9, 2, 7, 'ice'), ...key.slice(0, 3)],
  partKey2: [...cube(10, 3, 6, 'yellow'), ...key.slice(0, 3), ...cube(2, 9, 3, 'yellow')],
  exploded: [...cube(3, 2, 5, 'yellow'), ...cube(2, 11, 5, 'yellow'), ...cube(11, 11, 5, 'yellow')],
  sequence: [p('M3 14h4v4H3z', '#ffe020', '#d02020', 1.6), p('M8 9h4v4H8zM13 4h4v4h-4z', '#fff', '#222', 1.4)],
  wave: [p('M5 3h10l2 3v9l-6 3-7-3V6z', '#e8ecec', '#989ca0', 0.9), ...cube(8, 5, 6, 'yellow')],
  waveWin: [p('M3 2h15v13H3z', '#d8e4ff', '#3858c8'), p('M3 2h15v3H3z', '#2848d0'), ...cube(7, 6, 6, 'yellow'), p('M2 10q3 7 10 7', 'none', '#888', 1.2)],
  chain: [oval(8, 7, 3.6, 4, 'none', '#987c10', 2.4), oval(12, 13, 3.6, 4, 'none', '#987c10', 2.4), oval(8, 7, 3.6, 4, 'none', '#e8d040', 1), oval(12, 13, 3.6, 4, 'none', '#e8d040', 1)],
  hexKey: [p('M10 1l7 4v9l-7 4-7-4V5z', '#ffd028', '#a88008'), ...diamond(10, 10, '#203098')],
  chainInfo: [...link(6, 6), ...link(9, 8), p('M11 9h8v9h-8z', '#fff', '#283890', 1.3), l('M15 12v5', '#283890', 1.8)],
  fork: [l('M2 10h8M10 10l5-5h4M10 10h9M10 10l4 4', '#404858', 1.5), p('M12 11h7v7h-7z', '#203080'), l('M15 13v4', '#fff', 1.4)],
  check: [...cube(4, 7, 6, 'yellow'), l('M5 4h8v4', '#e04020', 1.8), l('M10 13l3 4 6-7', '#28a828', 2.2)],

  selGray: [...cube(2, 3, 5, 'gray'), ...cube(2, 10, 5, 'gray'), oval(14, 7, 3, 4, 'none', '#909078', 1.6), oval(12, 13, 3, 3, 'none', '#909078', 1.6)],
  pickFilter: [p('M2 2h15v15H2z', 'none', '#c83838', 1.2), dot(8, 8, 3, 'none', '#888', 1.2), l('M8 3v10M3 8h10', '#d83030', 1.1), p('M9 9h9l-4 4v5l-3-2v-3z', '#ffe030', '#a08010')],
  back: [l('M7 13h5q5-1 4-6', '#98a0a0', 2.4), p('M3 13l5-4v8z', '#98a0a0')],
  shell: [p('M2 11Q5 4 10 3l8 5v5l-5 4-11-3z', '#f0f4ff', '#303850', 1.3), p('M12 12l6-4v5l-5 4z', '#a0a8b8'), l('M6 9l4-3 5 4', '#d83030', 1.3), l('M2 11l10 1 1 5M12 12l5-4', '#303850')],
  snapTarget: [l('M2 7Q6 1 10 6', '#888', 2.4), dot(12, 13, 3.5, 'none', '#989898', 1.3), l('M12 8v10M7 13h10', '#989898', 1.2)],
  snapGray: [l('M3 5q7-3 10 4', '#888', 3.4), ...cube(11, 9, 4, 'gray'), p('M2 4h4v4H2z', '#808080')],
  marquee: [{ ...l('M3 4h14v12H3z', '#222', 1.3), dash: '3 2' }, ...nodes([3, 3], [17, 17])],
  cubeRed: [...iso(10, 10, 8, 'light'), l('M10 2v9l-6 3M10 11l6-2', '#e04048', 1.2)],

  clock: [dot(10, 10, 7.4, '#e8f0f4', '#585c60', 1.8), dot(10, 10, 5.6, 'none', '#98a8b0', 0.8), l('M10 5v5h4', '#222', 1.5), l('M10 4v1M10 15v1M4 10h1M15 10h1', '#444')],
  viewCube: [p('M10 2l7 3v9l-7 3-7-3V5z', '#f8fff8', '#109048', 1.3), l('M10 2v15M3 5l14 9M17 5L3 14', '#109048', 1), l('M13 14l5 4', '#e04020', 2.2)],
  tick: [p('M2 11l4-2 2 3q4-7 10-9-7 6-9 14H7q-2-3-5-6z', '#18b830', '#0c8020', 0.6)],
  camera: [p('M3 6l9-4 4 2v10l-9 4-4-2z', '#f8e0e8', '#c04060', 1.2), dot(9, 9, 3.4, '#a8c0e8', '#405890', 1.2), p('M13 8l5 5-1 4-5 1z', '#d018b8')],
  folder: [p('M2 5h6l1 2h7v10H2z', '#ecd070', '#a08020'), p('M5 9h14l-4 8H2z', '#fff4a0', '#a88c20')],
  folderEq: [p('M2 7h6l1 2h6v8H2z', '#ecd070', '#a08020'), p('M4 11h13l-3 6H2z', '#fff4a0', '#a88c20'), l('M12 2h7M12 5h7', '#181878', 1.6)],
  csysBlue: [p('M5 5l5 3v7l-5-2zM8 14l6-4 4 3-6 3z', '#b8ccff', '#5070c8', 0.8), l('M4 15V3M4 13l12-7M4 13l10 5', '#5070d8', 1.3), ...nodes([4, 3], [16, 6], [15, 18])],
  navAsm: [p('M3 3h6v5H3zM10 11h6v5h-6z', '#ffe838', '#807008'), l('M5 8v9M5 14h5M13 8h5', '#606070')],
  navPart: [p('M3 3h5v5H3z', '#e8a0a0', '#b04048'), oval(5.5, 3, 2.5, 1.4, '#f8d0d0', '#b04048', 0.8), l('M6 10v8M6 14h4M10 8h8M16 16h3', '#686870'), p('M11 12h4v4h-4z', '#f8e0e0', '#b04048')],
  reuse: [l('M6 3v12', '#4888e0', 4), dot(6, 16, 2.6, '#3068d0'), p('M11 4q5-2 7 1v12h-7v-4l3-2-3-2z', '#f0c840', '#a88020')],
  web: [p('M4 3h9l4 4v11H4z', '#fff8d8', '#a09060'), dot(10, 11, 4, '#4090e8', '#2858a0'), p('M8 9q3-1 4 1l-2 4z', '#58c040')],
  palettes: [p('M2 4l5-1v14l-5-2z', '#d0d4d8', '#606468'), p('M7 4h11v12H7z', '#f4f8fc', '#606878'), ...[[10, 7], [10, 10], [10, 13]].map(([x, y]) => dot(x, y, 1, '#d83030')), l('M12 7h4M12 10h4M12 13h4', '#3060b0')],
  spectrum: [p('M2 2h7v4H2z', '#f02818'), p('M2 6h7v4H2z', '#f8e020'), p('M2 10h7v4H2z', '#20c838'), p('M2 14h7v4H2z', '#2038f0'), l('M13 8l5 9M16 6l-5 5', '#4860c8', 2.2)],
  wizard: [l('M5 3v13', '#2848c8', 3.6), l('M7 13l9-8M12 9l6 8', '#3840a8', 2), ...star(13, 5), l('M3 17h5', '#c8b018', 2)],
  people: [dot(13, 6, 4, '#e89828'), p('M9 17q0-6 5-6t5 6z', '#289038'), dot(7, 10, 3, '#806040'), dot(7, 11, 2, '#ffc898'), p('M2 19q0-6 5-6t5 6z', '#9048c8')],
  scene: [p('M2 4h16v12H2z', '#3070c8', '#203050', 1.2), p('M3 12q4-4 7-1t7-1v5H3z', '#e0e8f8'), dot(14, 7, 2, '#ffe820')],
  roles: [p('M2 4h16v13H2z', '#f8fcff', '#70a8a0'), p('M4 6h4v3H4zM13 6h4v3h-4z', '#5868e0'), p('M12 12h6v3h-6z', '#3868a0'), p('M4 12h3v4H4z', '#fff', '#8080e0')],
  pin: [l('M3 17l5-5', '#222', 1.5), p('M6 9l5 5-1 1-5-5z', '#222'), p('M8 9l5-6q4 0 4 4l-6 5z', '#f4e828', '#222', 1.6), l('M5 9l6 6', '#222', 2)],
};

function Icon({ name, size = 20 }) {
  return (
    <Glyph viewBox="0 0 20 20" width={size} height={size} aria-hidden="true">
      {icons[name].map((s, i) =>
        s.t ? (
          <text key={i} x={s.x} y={s.y} fontSize={s.size} fill={s.fill} fontFamily={s.font} fontWeight="700">{s.t}</text>
        ) : (
          <path key={i} d={s.d} fill={s.fill} stroke={s.stroke} strokeWidth={s.w} strokeDasharray={s.dash} strokeLinejoin="round" />
        ),
      )}
    </Glyph>
  );
}

const Glyph = styled.svg`
  display: block;
  flex: none;
`;

/* ---------- page frame ---------- */

const Page = styled.div`
  display: flex;
  flex-direction: column;
  min-height: 100vh;
  overflow: hidden;
`;

const TitleBar = styled.header`
  display: flex;
  align-items: center;
  height: 25px;
  padding-left: 2px;
  gap: 3px;
  background: linear-gradient(#4a4b4e 0, #717376 7px, #1c1c1c 7px, #1c1c1c 24px, #000 24px);
  border-top-left-radius: 6px;
  color: #fff;
`;

const Title = styled.h1`
  flex: 1;
  margin: 0;
  font: 600 13px/24px "Open Sans", sans-serif;
`;

const Brand = styled.span`
  font: 700 14px/24px "Liberation Sans", sans-serif;
  margin-right: 27px;
`;

const Minimize = styled.button`
  align-self: flex-start;
  width: 13px;
  height: 20px;
  margin-right: -2px;
  padding: 8px 0 0 3px;
  border: 1px solid #888;
  border-top: 0;
  border-radius: 0 0 0 4px;
  background: linear-gradient(#777, #333);
  &::before { content: ""; display: block; height: 3px; background: #fff; }
`;

const MenuBar = styled.nav`
  display: flex;
  align-items: center;
  height: 23px;
  padding-left: 4px;
  background: linear-gradient(#e8e8e8, #e0e0e0);
  border-bottom: 1px solid #b4b4b4;
`;

const MenuButton = styled.button`
  padding: 0 0 1px;
  margin-right: 13px;
  border: 0;
  background: none;
  line-height: 20px;
  white-space: nowrap;
`;

const Latin = styled.span`
  font: 10px/12px "Liberation Mono", monospace;
  vertical-align: 1px;
  white-space: pre;
`;

const Bars = styled.div`
  background: linear-gradient(#dedede, #cacaca);
`;

const Bar = styled.div`
  display: flex;
  height: 26px;
  overflow: hidden;
`;

const Group = styled.div`
  display: flex;
  flex: none;
  align-items: center;
  border-top: 1px solid #f2f2f2;
  border-bottom: 1px solid #b6b6b6;
  border-right: ${(q) => (q.$open ? '0' : '1px solid #aaa')};
  margin-right: 1px;
`;

const Grip = styled.span`
  width: 3px;
  height: 16px;
  margin: 0 0 0 4px;
  background: radial-gradient(circle at 1px 1px, #fff 1px, #aaa 2px, transparent 2px) 0 0 / 3px 4px;
`;

const Divider = styled.span`
  width: 2px;
  height: 22px;
  margin: 0 2px;
  background: linear-gradient(to right, #aaa 50%, #f8f8f8 50%);
`;

const Tool = styled.button`
  display: flex;
  align-items: center;
  justify-content: center;
  width: 23px;
  height: 23px;
  padding: 0;
  border: 1px solid transparent;
  border-radius: 3px;
  background: none;
  ${(q) => q.$on && css`background: #fff; border-color: #666;`}
`;

const Caret = styled.button`
  display: flex;
  justify-content: center;
  align-items: center;
  align-self: stretch;
  width: ${(q) => (q.$low ? '13px' : '12px')};
  padding: ${(q) => (q.$low ? '8px 0 0' : '0 0 2px')};
  border: 0;
  background: none;
  &::before {
    content: "";
    border: 3px solid transparent;
    border-top-color: #111;
    border-bottom: 0;
  }
`;

const StartButton = styled.button`
  display: flex;
  align-items: center;
  gap: 4px;
  width: 46px;
  padding: 0 0 2px;
  border: 0;
  background: none;
  white-space: nowrap;
`;

/* In a tool list: "|" divider, "^" overflow menu, "name>" with a drop-down, "name*" switched on. */
function ToolItems({ list }) {
  return list.split(' ').map((token, i) => {
    if (token === '|') return <Divider key={i} />;
    if (token === '^') return <Caret key={i} $low aria-label="more" />;
    const name = token.replace(/[>*]/g, '');
    return (
      <React.Fragment key={i}>
        <Tool $on={token.endsWith('*')} aria-label={name}><Icon name={name} /></Tool>
        {token.endsWith('>') && <Caret aria-label={`${name} menu`} />}
      </React.Fragment>
    );
  });
}

function Tools({ list, start, open }) {
  return (
    <Group $open={open}>
      <Grip />
      {start && <StartButton><Icon name="nx" />开始</StartButton>}
      {start && <Caret aria-label="开始菜单" />}
      <ToolItems list={list} />
    </Group>
  );
}

const Dock = styled.div`
  position: relative;
  height: 15px;
  background: linear-gradient(#cacaca 0 6px, #aaa 6px 8px, #e8e8e8 8px 12px, #b0b0b0 12px 13px, #666 13px);
`;

const DockScroller = styled.div`
  position: absolute;
  left: 217px;
  top: 0;
  z-index: 2;
  display: flex;
  width: 95px;
  height: 18px;
  background: linear-gradient(#6c6e70 5px, #181818 5px);
`;

const DockArrow = styled.button`
  display: flex;
  align-items: center;
  justify-content: center;
  width: 18px;
  padding: 0;
  margin-left: ${(q) => (q.$end ? 'auto' : '0')};
  border: 1px solid #999;
  background: linear-gradient(#fff, #ddd);
`;

const Main = styled.main`
  display: flex;
  flex: 1;
  min-height: 0;
`;

/* ---------- resource bar ---------- */

const Rail = styled.div`
  display: flex;
  flex-direction: column;
  gap: 2px;
  width: 28px;
  padding-top: 16px;
  padding-left: 6px;
  background: linear-gradient(to right, #b4b4b4 0 22px, #999);
`;

const RailTab = styled.button`
  display: flex;
  align-items: center;
  height: ${(q) => (q.$on ? '35px' : '32px')};
  margin: ${(q) => `${q.$gap ? 12 : q.$on ? -2 : 0}px 0 ${q.$on ? -1 : 0}px ${q.$on ? -1 : 0}px`};
  padding: 0 0 0 2px;
  border: 1px solid #6a6a6a;
  border-right: 0;
  border-radius: 4px 0 0 4px;
  background: ${(q) => (q.$on ? '#ececec' : 'linear-gradient(#e0e0e0, #c8c8c8)')};
  overflow: hidden;
`;

const railTabs = [
  { icon: 'navAsm', label: '装配导航器' },
  { icon: 'navPart', label: '部件导航器', on: true },
  { icon: 'reuse', label: '重用库' },
  { icon: 'web', label: '浏览器', gap: true },
  { icon: 'clock', label: '历史记录', gap: true },
  { icon: 'palettes', label: '系统材料' },
  { icon: 'spectrum', label: '加工向导' },
  { icon: 'wizard', label: '过程工作室' },
  { icon: 'people', label: '角色' },
  { icon: 'scene', label: '系统场景' },
  { icon: 'roles', label: '模板' },
];

/* ---------- navigator panel ---------- */

const Panel = styled.aside`
  display: flex;
  flex-direction: column;
  width: 189px;
  padding: 6px 10px 5px 6px;
  background: #e9e9e9;
  border-left: 1px solid #fff;
  border-right: 2px solid #777;
`;

const PanelHead = styled.div`
  display: flex;
  align-items: center;
  gap: 5px;
  height: 22px;
`;

const PinButton = styled.button`
  width: 18px;
  padding: 0;
  border: 0;
  background: none;
`;

const PanelTitle = styled.h2`
  flex: 1;
  height: 22px;
  margin: 0;
  padding-left: 4px;
  font-size: 12px;
  font-weight: 700;
  line-height: 20px;
  border: 1px solid #f6f6f6;
  border-right-color: #999;
  border-bottom-color: #999;
  background: linear-gradient(#f4f4f4 50%, #dedede);
`;

const Tree = styled.div`
  display: flex;
  flex-direction: column;
  flex: 1;
  margin-top: 4px;
  border: 1px solid #5c5c5c;
  background: #fff;
  overflow: hidden;
`;

const TreeHead = styled.div`
  display: flex;
  align-items: center;
  gap: 14px;
  height: 16px;
  padding-left: 7px;
  border-bottom: 1px solid #888;
  background: linear-gradient(#f4f4f4, #d4d8dc);
  &::after {
    content: "";
    border: 5px solid transparent;
    border-bottom: 5px solid #111;
    border-top: 0;
  }
`;

const TreeBody = styled.ul`
  flex: 1;
  margin: 0;
  padding: 0;
  list-style: none;
  background: repeating-linear-gradient(#fff 0 19px, #e2e2e2 19px 20px, #f6f6f6 20px 39px, #e2e2e2 39px 40px);
`;

const TreeRow = styled.li`
  display: flex;
  align-items: center;
  height: 20px;
  padding: 0 0 2px 1px;
  line-height: 18px;
  white-space: nowrap;
`;

const dotsDown = 'repeating-linear-gradient(#aaa 0 1px, transparent 1px 2px)';
const dotsAcross = 'repeating-linear-gradient(to right, #aaa 0 1px, transparent 1px 2px)';

const Guide = styled.span`
  display: flex;
  flex: none;
  align-items: center;
  justify-content: flex-start;
  width: ${(q) => q.$w || 18}px;
  height: 20px;
  padding-left: 3px;
  background:
    ${dotsDown} 8px ${(q) => (q.$part === 'first' ? '10px' : '0')} / 1px ${(q) => (q.$part === 'last' ? '10px' : '100%')} no-repeat,
    ${dotsAcross} 8px 9px / 9px 1px no-repeat;
`;

const Spacer = styled.span`
  flex: none;
  width: 18px;
`;

const Expander = styled.button`
  width: 9px;
  height: 9px;
  padding: 0;
  border: 1px solid #888;
  border-radius: 2px;
  background:
    linear-gradient(#222, #222) center / 5px 1px no-repeat,
    linear-gradient(#222, #222) center / 1px ${(q) => (q.$open ? '0px' : '5px')} no-repeat,
    #fff;
`;

const RowLabel = styled.label`
  display: flex;
  align-items: center;
  gap: 1px;
`;

const RowCheck = styled.input`
  appearance: none;
  width: 12px;
  height: 12px;
  margin: 0 0 0 1px;
  border: 1px solid #111;
  background: #fff;
  &:checked::before {
    content: "";
    display: block;
    height: 10px;
    background: #10b428;
    clip-path: polygon(5% 45%, 22% 35%, 38% 58%, 88% 2%, 100% 8%, 46% 100%, 30% 100%);
  }
`;

const HScroll = styled.div`
  display: flex;
  height: 17px;
  background: linear-gradient(#f0efe8, #fff);
`;

const ScrollArrow = styled.button`
  display: flex;
  align-items: center;
  justify-content: center;
  width: 17px;
  padding: 0;
  margin-left: ${(q) => (q.$end ? 'auto' : '0')};
  border: 1px solid #94a8d8;
  background: linear-gradient(#fff, #ccd6f4);
`;

const Thumb = styled.div`
  width: 74px;
  border: 1px solid #7f94c8;
  background:
    repeating-linear-gradient(to right, #8898c0 0 1px, transparent 1px 2px) center / 8px 7px no-repeat,
    linear-gradient(#dce2f8, #c0caec);
`;

const Splitter = styled.div`
  display: flex;
  align-items: center;
  gap: 4px;
  height: 12px;
  &::before, &::after { content: ""; flex: 1; height: 1px; background: #a8a8a8; }
  span { width: 27px; height: 6px; border: 1px solid #999; background: #d4d4d4; }
`;

const Section = styled.button`
  display: flex;
  align-items: center;
  height: 22px;
  padding: 0 0 0 5px;
  border: 1px solid #f4f4f4;
  border-right-color: #999;
  border-bottom-color: #888;
  background: linear-gradient(#f2f2f2 50%, #d8dada);
  font-size: 12px;
  font-weight: 700;
  line-height: 18px;
  svg { margin-left: auto; border-left: 1px solid #999; }
  span { padding-bottom: 2px; }
`;

const rows = [
  { name: 'History Mode', icon: 'clock', part: 'first' },
  { name: '模型视图', icon: 'viewCube', toggle: true },
  { name: '摄像机', icon: 'camera', toggle: true, ticked: true },
  { name: '用户表达式', icon: 'folderEq', toggle: true },
  { name: '模型历史记录', icon: 'folder', toggle: true, open: true, part: 'last' },
  { name: '基准坐标系', note: ' (0)', icon: 'csysBlue', child: true },
  { name: '回转', note: ' (1)', icon: 'revolve', child: true },
  { name: '草图', note: ' (2) "SKETCH', icon: 'sketch', child: true },
  { name: '文本', note: ' (4)', icon: 'letter', child: true },
  { name: '投影曲线', note: ' (5)', icon: 'project', child: true },
  { name: '拉伸', note: ' (7)', icon: 'extrude', child: true, part: 'last' },
];

function Row({ row }) {
  if (row.child) {
    return (
      <TreeRow>
        <Spacer />
        <Guide $w={20} $part={row.part} />
        <RowLabel>
          <RowCheck type="checkbox" defaultChecked />
          <Icon name={row.icon} size={18} />
          <span>{row.name}<Latin>{row.note}</Latin></span>
        </RowLabel>
      </TreeRow>
    );
  }
  return (
    <TreeRow>
      <Guide $part={row.part}>{row.toggle && <Expander $open={row.open} aria-label={row.name} />}</Guide>
      <RowLabel as="span">
        {row.ticked && <Icon name="tick" size={15} />}
        <Icon name={row.icon} size={18} />
        {row.icon === 'clock' ? <Latin>{row.name}</Latin> : row.name}
      </RowLabel>
    </TreeRow>
  );
}

const Chevron = ({ d, size = 10, color, w = 2 }) => (
  <Glyph viewBox="0 0 10 10" width={size} height={size} aria-hidden="true">
    <path d={d} fill="none" stroke={color} strokeWidth={w} />
  </Glyph>
);

/* ---------- graphics window ---------- */

const Canvas = styled.section`
  position: relative;
  flex: 1;
  min-width: 0;
  min-height: 740px;
  border-top: 1px solid #8c8870;
  background: linear-gradient(#b6b7b9, #c4c5c7 25%, #d2d3d5 48%, #e2e3e5 66%, #e7e8ea);
`;

const Scene = styled.svg`
  position: absolute;
  inset: 0;
  width: 100%;
  height: 100%;
`;

function Viewport() {
  return (
    <Canvas aria-label="图形窗口">
      <Scene>
        <defs>
          {Object.entries(tones).map(([tone, [top, front, side]]) => (
            <React.Fragment key={tone}>
              <linearGradient id={`ramp-${tone}`} x1="0" y1="0" x2="1" y2="1">
                <stop offset="0" stopColor={top} />
                <stop offset="0.45" stopColor={front} />
                <stop offset="1" stopColor={side} />
              </linearGradient>
              <linearGradient id={`round-${tone}`}>
                <stop offset="0" stopColor={front} />
                <stop offset="0.35" stopColor={top} />
                <stop offset="0.6" stopColor={front} />
                <stop offset="1" stopColor={side} />
              </linearGradient>
            </React.Fragment>
          ))}
          <radialGradient id="dome" gradientUnits="userSpaceOnUse" cx="0" cy="0" r="1" gradientTransform="translate(850 680) scale(640 225)">
            <stop offset="0" stopColor="#c9e0e5" />
            <stop offset="0.45" stopColor="#bfd6db" />
            <stop offset="0.85" stopColor="#b0c5ca" />
            <stop offset="1" stopColor="#a2b7bc" />
          </radialGradient>
          <linearGradient id="pillar">
            <stop offset="0" stopColor="#7595a5" />
            <stop offset="0.6" stopColor="#9fc5da" />
            <stop offset="1" stopColor="#7f9fb0" />
          </linearGradient>
        </defs>
        <g transform="translate(-217 -168)">
          <path d="M232 642Q748 336 1264 642z" fill="url(#dome)" />
          <path d="M232 642.5H1264M459 537.5H1037" stroke="#333" fill="none" />
          <path d="M587 537.5H845" stroke="#3060c8" />
          <path d="M605 538H792" stroke="#2860d0" strokeWidth="2" />
          <path d="M565 538.5h1M587 538.5h6M798 538.5h22M841 538.5h4" stroke="#2860d0" />
          <path d="M638.500 450.500L656 449L663 494L645 496z" fill="#9cc2d6" />
          <path d="M656 446.500H664.500L672 492.500L662 494z" fill="#8bb0c4" />
          <path d="M645 496L638.500 450.500L656 449L663 494M656 449V446.500H664.500L672 492.500M657 450L663 494" fill="none" stroke="#2c3438" />
          <path d="M713.500 441.500L730 440.500H741L760.500 441.500L767 488L720 488z" fill="#8db1c6" />
          <path d="M720 488L713.500 441.500L730 440.500H741L760.500 441.500L767 488M741 440.500L748 487" fill="none" stroke="#2c3438" />
          <path d="M797 444.500H805L811 491L803.500 490z" fill="#5d7886" />
          <path d="M805 444.500L843.500 449.500L850 495L811 491z" fill="url(#pillar)" />
          <path d="M803.500 490L797 444.500H805L843.500 449.500L850 495M805 444.500L811 491" fill="none" stroke="#2c3438" />
          <path d="M662 493.500L672 492M720 488.500L748 486.500L768 487.500M803 490.500L820 492L851 495.500" fill="none" stroke="#2860d0" />
          <ellipse cx="735" cy="472.500" rx="158.500" ry="54.500" fill="none" stroke="#f01010" />
          <g fill="none" stroke="#cbcbcb" strokeWidth="1.500">
            <path d="M748 642V556M741 556H755L748 522z" />
            <path d="M750 642H835M835 642V635L868 642" />
          </g>
          <path d="M835 643V649L868 643" fill="none" stroke="#928a62" strokeWidth="1.500" />
          <path d="M741.500 643a6.500 6 0 0 0 13 0M748 643v4" fill="none" stroke="#928a62" strokeWidth="1.500" />
          <path d="M741.500 642a6.500 6 0 0 1 13 0" fill="none" stroke="#cbcbcb" strokeWidth="1.500" />
          <g fill="#c8cacc" fontFamily="DejaVu Sans" fontSize="10">
            <text x="748" y="516">Z</text>
            <text x="749" y="594">ZC</text>
            <text x="749" y="642">YC</text>
            <text x="797" y="642">XC</text>
            <text x="875" y="642">X</text>
          </g>
          <path d="M285 848V814" stroke="#2c34ff" strokeWidth="2" />
          <path d="M285 848H319" stroke="#ff2c2c" strokeWidth="2" />
          <circle cx="284.500" cy="848.500" r="4" fill="#a8a8a8" />
          <g fontFamily="DejaVu Sans" fontSize="10">
            <text x="281" y="810" fill="#3438e8">z</text>
            <text x="326" y="852" fill="#f02c2c">x</text>
          </g>
        </g>
      </Scene>
    </Canvas>
  );
}

/* ---------- bottom bars ---------- */

const Footer = styled.footer`
  border-top: 1px solid #fff;
  background: linear-gradient(#dcdcdc, #c6c6c6 26px, #999 26px 27px, #d4d4d4 27px);
`;

const SelectionBar = styled.div`
  display: flex;
  align-items: center;
  height: 27px;
  padding-left: 6px;
  border-bottom: 1px solid #aaa;
`;

const Combo = styled.label`
  display: flex;
  align-items: stretch;
  width: ${(q) => q.$w}px;
  height: 16px;
  margin-right: 7px;
  border: 1px solid #333;
  border-radius: 4px;
  background: #fff;
  overflow: hidden;
  select {
    flex: 1;
    min-width: 0;
    appearance: none;
    padding: 0 0 1px 1px;
    border: 0;
    background: none;
    line-height: 13px;
  }
  svg {
    background: linear-gradient(#d4ecff, #4c94dc);
    border-left: 1px solid #456;
    pointer-events: none;
  }
`;

function Filter({ label, width }) {
  return (
    <Combo $w={width}>
      <select aria-label={label}><option>{label}</option></select>
      <Glyph viewBox="0 0 16 14" width="17" height="14" aria-hidden="true"><path d="M1 4h14l-7 8z" fill="#0c1420" /></Glyph>
    </Combo>
  );
}

const menus = [['文件', 'F'], ['编辑', 'E'], ['视图', 'V'], ['插入', 'S'], ['格式', 'R'], ['工具', 'T'], ['装配', 'A'], ['信息', 'I'], ['分析', 'L'], ['首选项', 'P'], ['窗口', 'O'], ['帮助', 'H']];

const MenuIcon = styled.span`
  width: 26px;
  padding-left: 2px;
`;

export default function App() {
  return (
    <Page>
      <GlobalStyle />
      <TitleBar>
        <Icon name="nx" size={18} />
        <Title>NX 6 - Modeling - [test.prt]</Title>
        <Brand>SIEMENS</Brand>
        <Minimize aria-label="最小化" />
      </TitleBar>
      <MenuBar>
        <MenuIcon><Icon name="app" /></MenuIcon>
        {menus.map(([name, k]) => (
          <MenuButton key={name}>{name}<Latin>(<u>{k}</u>)</Latin></MenuButton>
        ))}
      </MenuBar>
      <Bars>
        <Bar>
          <Tools start list="new open save | cut copy paste | undo redo | info | find ^" />
          <Tools list="fit fitGray zoomBox zoomIn rotate pan perspective | shaded> shadedEdge solid wire wireHidden contrast bracket> blank> | clipA clipB clipC ^" />
          <Tools open list="wcsMove* wcsNodes wcs wcsRotate wcsShift wcsColor wcsX wcsY wcsSave palette play partA partPick partB partC | ruler angle" />
        </Bar>
        <Bar>
          <Tools list="sketch | extrude revolve sweep variSweep tube | boss pad hole pocket groove rib | emboss pattern mirrorBody plate bend bendCut | block cylinder cone sphere ^" />
          <Tools open list="line arc curves* circleLine spline polyCurve splineOff letter point points corner rect polygon | ellipse helix law offset bridge> wrap curveS curveT project> combine intersect section extract unwrap plate" />
        </Bar>
        <Bar>
          <Tools list="csys> plane> | facet sphereMesh | blendEdge faceBlend softBlend chamfer draft thread unite subtract book sew patch wrapGeo scaleBody tubes trim split face hollow | thick offsetFace | group tree ^" />
          <Tools open list="surfA surfB | ruled through throughMesh swept nodesDark nSided transition brush | offsetSurf enlarge law2 extension chevrons midSurf | offsetRed layers bladeBlue boot flange stand arch hook" />
        </Bar>
        <Bar>
          <Tools list="loupeKey pageKey extend cross divide cornerR chamferC length smooth ^" />
          <Tools list="meshKey meshKey2 meshRed meshStripe meshTool isocline | cubic morph xform ^" />
          <Tools list="nodesDark beam | spray fourPoint greenMesh | pour intersectC explode bar | bowtie wavy redBlocks spool stripes rainbow redGrid | stamp ^" />
          <Tools list="green ^" />
        </Bar>
      </Bars>
      <Dock>
        <DockScroller>
          <DockArrow aria-label="向左"><Chevron d="M9 1L2 5L9 9" size={11} color="#555" /></DockArrow>
          <DockArrow $end aria-label="向右"><Chevron d="M1 1L8 5L1 9" size={11} color="#555" /></DockArrow>
        </DockScroller>
      </Dock>
      <Main>
        <Rail>
          {railTabs.map((t) => (
            <RailTab key={t.label} $on={t.on} $gap={t.gap} aria-label={t.label}><Icon name={t.icon} size={18} /></RailTab>
          ))}
        </Rail>
        <Panel>
          <PanelHead>
            <PinButton aria-label="固定"><Icon name="pin" size={16} /></PinButton>
            <PanelTitle>部件导航器</PanelTitle>
          </PanelHead>
          <Tree>
            <TreeHead>名称</TreeHead>
            <TreeBody>{rows.map((r) => <Row key={r.name} row={r} />)}</TreeBody>
            <HScroll>
              <ScrollArrow aria-label="向左滚动"><Chevron d="M7 1L3 5L7 9" color="#2040a0" /></ScrollArrow>
              <Thumb />
              <ScrollArrow $end aria-label="向右滚动"><Chevron d="M3 1L7 5L3 9" color="#2040a0" /></ScrollArrow>
            </HScroll>
          </Tree>
          <Splitter><span /></Splitter>
          {['相关性', '细节', '预览'].map((s) => (
            <Section key={s}>
              <span>{s}</span>
              <Glyph viewBox="0 0 21 20" width="21" height="20" aria-hidden="true"><path d="M6 6l5 8 5-8" fill="none" stroke="#666" strokeWidth="2.500" /></Glyph>
            </Section>
          ))}
        </Panel>
        <Viewport />
      </Main>
      <Footer>
        <Bar>
          <Tools list="asmFind asmOpen asmFrame asmWire asmSave asmGray | addPart newPart newParent partArray movePart mirrorAsm constraint remember sectionAsm replace partKey partKey2 | exploded sequence | wave waveWin chain hexKey chainInfo fork | check ^" />
        </Bar>
        <SelectionBar>
          <Filter label="没有选择过滤器" width={112} />
          <Filter label="整个装配" width={114} />
          <ToolItems list="selGray | pickFilter> back shell* snapTarget snapGray | marquee> | cubeRed" />
        </SelectionBar>
      </Footer>
    </Page>
  );
}
